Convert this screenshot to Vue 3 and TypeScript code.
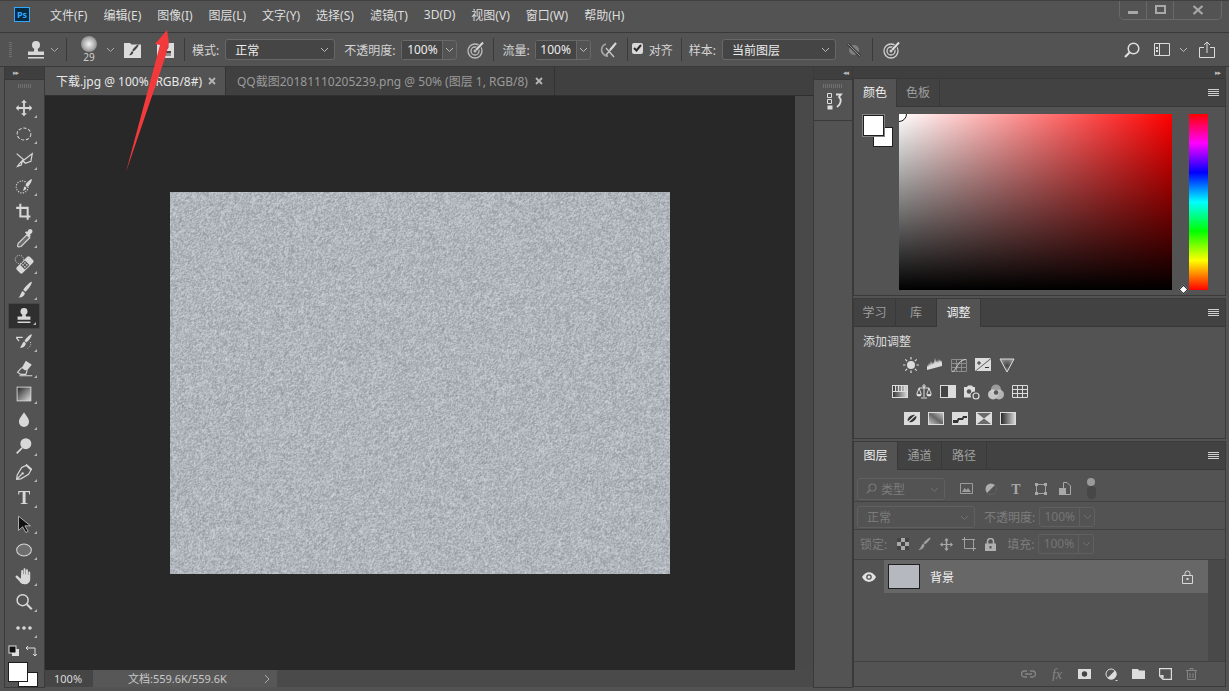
<script setup lang="ts">
import { onMounted, ref } from 'vue'

const menus = ['文件(F)', '编辑(E)', '图像(I)', '图层(L)', '文字(Y)', '选择(S)', '滤镜(T)', '3D(D)', '视图(V)', '窗口(W)', '帮助(H)']

const c = '#d8d8d8'
// tool strip icons, 24x24 box centred on the row
const tools: string[] = [
  `<path fill="${c}" d="M12 3l3.2 3.2h-2.2V11h4.800V8.800L21 12l-3.200 3.200V13H13v4.800h2.200L12 21l-3.200-3.200H11V13H6.200v2.200L3 12l3.200-3.200V11H11V6.200H8.800z"/>`,
  `<ellipse cx="12" cy="12" rx="7.500" ry="6.500" fill="none" stroke="${c}" stroke-width="1.100" stroke-dasharray="3.500 1.800"/>`,
  `<path fill="none" stroke="${c}" stroke-width="1.300" d="M4 5l8 7 9-7-1.500 8.500-6 2-3-3-3.500 3.500-2 3 4-1.500 1.500-5"/>`,
  `<circle cx="10" cy="13" r="6.500" fill="none" stroke="${c}" stroke-width="1.300" stroke-dasharray="1.200 1.500"/><path fill="${c}" d="M20.500 4.500c.6 2-3 7.500-5 8.500l-2-1.700c1-2.300 5.500-7 7-6.800zM12.800 12.300l1.800 1.500c-.3 2-2 3.300-4 3 1.400-1 1-3.300 2.200-4.500z"/>`,
  `<path fill="none" stroke="${c}" stroke-width="2.200" d="M8 3v14h11M3.500 7.500H16v13"/><path fill="#535353" d="M3 3h2v2H3z"/>`,
  `<path fill="${c}" d="M15 8.500l-9.500 9.500-.5 3 .8.800 3-.6 9.500-9.500z" fill-opacity=".2" stroke="${c}" stroke-width="1.200"/><path fill="${c}" d="M17 3c1-1 2.500-1 3.500 0s1 2.500 0 3.500L18.500 8.500l1 1-1.500 1.500-5-5 1.500-1.500 1 1z"/>`,
  `<g transform="rotate(-45 13 13)"><rect x="3" y="8.500" width="20" height="9" rx="2" fill="${c}"/><rect x="9.500" y="9.500" width="7" height="7" fill="#535353"/><g fill="${c}"><circle cx="11.500" cy="11.500" r=".9"/><circle cx="14.500" cy="11.500" r=".9"/><circle cx="11.500" cy="14.500" r=".9"/><circle cx="14.500" cy="14.500" r=".9"/></g></g><circle cx="7" cy="7" r="4.500" fill="#535353" stroke="${c}" stroke-dasharray="1.200 1.300"/>`,
  `<path fill="${c}" d="M20.500 3c.6 2.500-4.500 9-7 11l-2.300-2c1.500-3 7-8.500 9.300-9zM10.500 13l2.500 2.200c-.5 3.300-3.500 5.500-7 5 2.300-1.700 2.300-5.500 4.500-7.200z"/>`,
  `<circle cx="12" cy="7" r="3.800" fill="${c}"/><path fill="${c}" d="M10.500 9h3l.6 3.500H19V16H5v-3.500h4.900zM5 18h14v1.500H5z"/>`,
  `<path fill="${c}" d="M20.500 3.500c.5 2-3.500 7.500-6 9l-2-1.700c1.500-2.800 6-7.500 8-7.300zM12 11.500l2 1.800c-.2 3-3 5.500-6.500 5 2-1.500 2.500-5.300 4.500-6.800z"/><path fill="none" stroke="${c}" stroke-width="1.300" d="M3.500 7h7M3.500 7l3 4"/><path fill="none" stroke="${c}" stroke-dasharray="1 1.500" d="M19 12c1 3 0 5-3 7"/>`,
  `<path fill="${c}" d="M14 4l6.500 4.500-5 6H13L9.500 12z"/><path fill="none" stroke="${c}" stroke-width="1.200" d="M9.500 11.500l-4.500 5 3.500 2.500H14l1.500-4.500M7 20.500h14"/>`,
  `<defs><linearGradient id="tg" x1="0" x2="1" y1="0" y2="1"><stop offset="0" stop-color="#222"/><stop offset="1" stop-color="#ddd"/></linearGradient></defs><rect x="4.500" y="4.500" width="15" height="15" fill="url(#tg)" stroke="${c}"/>`,
  `<path fill="${c}" d="M12 3.500c2 3.500 5.500 6.500 5.500 10.500a5.500 5.500 0 0 1-11 0c0-4 3.500-7 5.500-10.500z"/>`,
  `<circle cx="14" cy="9.500" r="6" fill="${c}"/><path stroke="${c}" stroke-width="1.800" d="M10 14l-6 6"/>`,
  `<path fill="none" stroke="${c}" stroke-width="1.300" d="M15 4.500l5 4.500-3 5.500-8.500 5L4 20l.5-4.500L9.500 7zM4.500 19.500l5-5"/><circle cx="10.500" cy="13.500" r="1.300" fill="${c}"/><path fill="${c}" d="M14.500 3l6.500 6-1.500 1.500L13.500 5z"/>`,
  `<text x="12" y="19" text-anchor="middle" font-family="Liberation Serif, serif" font-weight="700" font-size="20" fill="${c}">T</text>`,
  `<path fill="#111" stroke="${c}" stroke-width=".8" d="M6 3.500l13 10.500h-6l3.500 6-2.500 1.300-3.500-6.300L6 19z"/>`,
  `<ellipse cx="12" cy="12" rx="8" ry="6.500" fill="#6e6e6e" stroke="${c}" stroke-width="1.100"/>`,
  `<path fill="${c}" d="M9 7c0-2 2-2 2 0v3h.5V5c0-2 2.200-2 2.200 0v5h.5V6c0-2 2.100-2 2.100 0v5h.5V8.500c0-1.800 2-1.800 2 0V15c0 4-2.500 6-6 6-3 0-4.500-1-6-3.500L3 13.500c-.8-1.600 1-2.700 2.200-1.500L8 14.800h.6z"/>`,
  `<circle cx="10.500" cy="10" r="6" fill="none" stroke="${c}" stroke-width="1.600"/><path stroke="${c}" stroke-width="2.200" d="M15 14.500l5.500 5.500"/>`,
  `<g fill="${c}"><circle cx="5.500" cy="12" r="2"/><circle cx="12" cy="12" r="2"/><circle cx="18.500" cy="12" r="2"/></g>`,
]

const g = '#dcdcdc'
const adjRows: string[][] = [
  [
    `<circle cx="8" cy="8" r="4" fill="${g}"/><path stroke="${g}" stroke-width="1.200" d="M8 0v2.500M8 13.500V16M0 8h2.500M13.500 8H16M2.300 2.300l1.800 1.800M11.900 11.900l1.800 1.800M2.300 13.700l1.800-1.800M11.900 4.100l1.800-1.800"/>`,
    `<path fill="${g}" d="M0 13V8l1 2 1-4 1 3 1-5 1 4 1-3 1 2 1-6 1 5 1-3 1 3 1-4 1 3 1-2 1 3v3z"/>`,
    `<path fill="none" stroke="#8c8c8c" d="M.5 2.500h15v12H.5zM5.500 2.500v12M10.500 2.500v12M.5 6.500h15M.5 10.500h15"/><path fill="none" stroke="#cfcfcf" d="M1 14.500c5 0 5-12 14-12"/>`,
    `<rect y="1" width="16" height="13" fill="${g}"/><path fill="#535353" d="M0 14L16 1v1L1 14z"/><path stroke="#333" d="M2 6h4M4 4v4M10 10.500h4"/>`,
    `<defs><radialGradient id="vg"><stop offset="0" stop-color="#444"/><stop offset="1" stop-color="#8a8a8a"/></radialGradient></defs><path fill="url(#vg)" stroke="${g}" d="M1 2h14L8 15z"/>`,
  ],
  [
    `<defs><linearGradient id="hs" x1="0" x2="1" y1="0" y2="0"><stop offset="0" stop-color="#333"/><stop offset="1" stop-color="#ddd"/></linearGradient></defs><rect x=".5" y="1.500" width="15" height="12" fill="url(#hs)" stroke="${g}"/><path stroke="${g}" stroke-width="1" d="M.5 7.500h15M3.500 2v5M6.500 2v5M9.500 2v5M12.500 2v5"/>`,
    `<path fill="none" stroke="${g}" d="M8 2v11M3 4h10M3 4L.8 10M3 4l2.200 6M13 4l-2.200 6M13 4l2.200 6M5 14h6"/><path fill="${g}" d="M.5 10h5a2.500 2.500 0 0 1-5 0zM10.500 10h5a2.500 2.500 0 0 1-5 0z"/><circle cx="8" cy="2" r="1.200" fill="none" stroke="${g}"/>`,
    `<rect x=".5" y="1.500" width="15" height="12" fill="#444" stroke="${g}"/><rect x="8" y="1.500" width="7.500" height="12" fill="${g}"/>`,
    `<path fill="${g}" d="M0 3h3l1-1.500h4L9 3h2v4.500a4 4 0 0 0-4 6H0z"/><circle cx="5" cy="7.500" r="2.200" fill="#535353"/><circle cx="12" cy="12" r="3" fill="none" stroke="${g}" stroke-width="1.200"/>`,
    `<circle cx="8" cy="5.500" r="5" fill="#9a9a9a"/><circle cx="5" cy="10.500" r="5" fill="#dadada" fill-opacity=".85"/><circle cx="11" cy="10.500" r="5" fill="#c6c6c6" fill-opacity=".85"/><circle cx="8" cy="8.500" r="2.200" fill="#555"/>`,
    `<path fill="none" stroke="${g}" d="M.5 1.500h15v12H.5zM5.500 1.500v12M10.500 1.500v12M.5 5.500h15M.5 9.500h15"/>`,
  ],
  [
    `<rect y="1" width="16" height="13" fill="${g}"/><ellipse cx="8" cy="7.500" rx="5" ry="3" transform="rotate(-35 8 7.500)" fill="#333"/><path stroke="${g}" stroke-width="1.200" d="M3 12L13 3"/>`,
    `<defs><linearGradient id="ps" x1="0" x2="1" y1="1" y2="0"><stop offset="0" stop-color="#ccc"/><stop offset=".5" stop-color="#666"/><stop offset="1" stop-color="#ccc"/></linearGradient></defs><rect x=".5" y="1.500" width="15" height="12" fill="url(#ps)" stroke="${g}"/>`,
    `<rect y="1" width="16" height="13" fill="${g}"/><path fill="#333" d="M1 12V9h4l1-2h4l1-2h4v2h-3l-1 2H7l-1 3z"/>`,
    `<rect y="1" width="16" height="13" fill="${g}"/><path fill="#6a6a6a" d="M1 2h14L8 7.500zM1 13h14L8 7.500z"/>`,
    `<defs><linearGradient id="gm" x1="0" x2="1" y1="0" y2="0"><stop offset="0" stop-color="#222"/><stop offset="1" stop-color="#ddd"/></linearGradient></defs><rect x=".5" y="1.500" width="15" height="12" fill="url(#gm)" stroke="${g}"/>`,
  ],
]

const noise = ref<HTMLCanvasElement | null>(null)

// the document is a plain grey noise texture
onMounted(() => {
  const cv = noise.value
  if (!cv) return
  const w = cv.width
  const h = cv.height
  const ctx = cv.getContext('2d')!
  const img = ctx.createImageData(w, h)
  let seed = 1337
  const rnd = () => {
    seed = (seed * 1664525 + 1013904223) >>> 0
    return seed / 4294967296
  }
  const raw = new Float32Array(w * h)
  for (let i = 0; i < raw.length; i++) raw[i] = rnd() - 0.5
  for (let y = 0; y < h; y++) {
    for (let x = 0; x < w; x++) {
      const r = x + 1 < w ? raw[y * w + x + 1] : 0
      const d = y + 1 < h ? raw[(y + 1) * w + x] : 0
      const v = (raw[y * w + x] + r * 0.7 + d * 0.7) * 26
      const i = (y * w + x) * 4
      img.data[i] = 176 + v
      img.data[i + 1] = 181 + v
      img.data[i + 2] = 187 + v
      img.data[i + 3] = 255
    }
  }
  ctx.putImageData(img, 0, 0)
})
</script>

<template>
  <div class="ps">
    <header class="menubar">
      <div class="logo">Ps</div>
      <nav class="menus">
        <span v-for="m in menus" :key="m">{{ m }}</span>
      </nav>
      <div class="winctl">
        <span class="wbtn"><i class="w-min"></i></span>
        <span class="wbtn"><i class="w-max"></i></span>
        <span class="wbtn wide">
          <svg width="12" height="12" viewBox="0 0 12 12"><path stroke="#a8a8a8" stroke-width="2.200" d="M1.500 2l9 8M10.500 2l-9 8" /></svg>
        </span>
      </div>
    </header>

    <section class="options">
      <div class="grip-v"></div>
      <svg class="ml15" width="18" height="20" viewBox="0 0 18 20"><circle cx="9" cy="5" r="4" fill="#d8d8d8" /><path fill="#d8d8d8" d="M7.500 7h3l.6 4.500H17V15H1v-3.500h5.900zM1 17h16v1.500H1z" /></svg>
      <svg class="ml5" width="9" height="6" viewBox="0 0 9 6"><path fill="none" stroke="#aaa" d="M1 1l3.500 3.500L8 1" /></svg>
      <i class="vsep ml7"></i>
      <div class="brushtip">
        <span class="tip"></span>
        <span class="tipnum">29</span>
      </div>
      <svg class="ml7" width="9" height="6" viewBox="0 0 9 6"><path fill="none" stroke="#aaa" d="M1 1l3.500 3.500L8 1" /></svg>
      <svg class="ml9" width="17" height="17" viewBox="0 0 17 17"><path fill="#dcdcdc" d="M0 2h6l1.500 1.500H17V17H0z" /><path fill="#444" d="M14.500 3.500c.5 1.500-3 5.500-5 7l-1.300-1.200c1.300-2 4.800-5.800 6.300-5.800zM8 10l1.300 1.200c-.3 2-2 3.300-4.300 3 1.500-1 1.700-3 3-4.200z" /></svg>
      <svg class="ml16" width="17" height="17" viewBox="0 0 17 17"><path fill="#dcdcdc" d="M0 2h17v15H0z" /><circle cx="8.500" cy="5.500" r="3" fill="#444" /><path fill="#444" d="M7.500 7h2l.4 3H14v2.500H3V10h4.100zM3 13.500h11v1H3z" /></svg>
      <i class="vsep ml10"></i>
      <span class="lbl ml7">模式:</span>
      <div class="select ml6 w110">正常<svg width="9" height="6" viewBox="0 0 9 6"><path fill="none" stroke="#bbb" d="M1 1l3.500 3.500L8 1" /></svg></div>
      <span class="lbl ml9">不透明度:</span>
      <div class="spin ml6"><span>100%</span><b><svg width="9" height="6" viewBox="0 0 9 6"><path fill="none" stroke="#bbb" d="M1 1l3.500 3.500L8 1" /></svg></b></div>
      <svg class="ml10" width="18" height="18" viewBox="0 0 18 18"><circle cx="8" cy="10" r="7" fill="none" stroke="#bdbdbd" stroke-width="1.300" /><circle cx="8" cy="10" r="4" fill="none" stroke="#bdbdbd" stroke-width="1.300" /><circle cx="8" cy="10" r="1.500" fill="#bdbdbd" /><path stroke="#535353" stroke-width="3.500" d="M9 9l7-7" /><path stroke="#d8d8d8" stroke-width="2" d="M9 9l7-7.500" /></svg>
      <i class="vsep ml8"></i>
      <span class="lbl ml8">流量:</span>
      <div class="spin ml5"><span>100%</span><b><svg width="9" height="6" viewBox="0 0 9 6"><path fill="none" stroke="#bbb" d="M1 1l3.500 3.500L8 1" /></svg></b></div>
      <svg class="ml9" width="18" height="18" viewBox="0 0 18 18"><path fill="none" stroke="#a0a0a0" stroke-width="1.800" d="M6 3C2 4 1 8 2 11c1 2 3 4 6 4" /><path fill="none" stroke="#c8c8c8" stroke-width="1.300" d="M6 14l8-9M6 7l8 9" /><path stroke="#d8d8d8" stroke-width="2" d="M10 9l6-7" /></svg>
      <i class="vsep ml9"></i>
      <span class="check ml4"><svg width="9" height="8" viewBox="0 0 9 8"><path fill="none" stroke="#2c2c2c" stroke-width="2" d="M1 4l2.500 2.500L8 1" /></svg></span>
      <span class="lbl ml6">对齐</span>
      <i class="vsep ml8"></i>
      <span class="lbl ml7">样本:</span>
      <div class="select ml6 w114">当前图层<svg width="9" height="6" viewBox="0 0 9 6"><path fill="none" stroke="#bbb" d="M1 1l3.500 3.500L8 1" /></svg></div>
      <svg class="ml11" width="14" height="14" viewBox="0 0 14 14"><circle cx="7" cy="7" r="5" fill="#7f7f7f" /><path stroke="#3d3d3d" stroke-width="3" d="M1 1l12 12" /><path stroke="#8f8f8f" d="M1 1l12 12" /></svg>
      <i class="vsep ml11"></i>
      <svg class="ml10" width="18" height="18" viewBox="0 0 18 18"><circle cx="8" cy="10" r="7" fill="none" stroke="#cfcfcf" stroke-width="1.300" /><circle cx="8" cy="10" r="4" fill="none" stroke="#cfcfcf" stroke-width="1.300" /><circle cx="8" cy="10" r="1.500" fill="#cfcfcf" /><path stroke="#535353" stroke-width="3.500" d="M9 9l7-7" /><path stroke="#e0e0e0" stroke-width="2" d="M9 9l7-7.500" /></svg>
      <div class="opt-right">
        <svg width="16" height="16" viewBox="0 0 16 16"><circle cx="9.500" cy="6.500" r="5.300" fill="none" stroke="#e0e0e0" stroke-width="1.500" /><path stroke="#e0e0e0" stroke-width="2.200" d="M5.500 10.500L1 15" /></svg>
        <svg class="ml14" width="17" height="13" viewBox="0 0 17 13"><path fill="none" stroke="#dcdcdc" d="M.5.500h15v12H.5zM5.500.500v12" /><path fill="#dcdcdc" d="M2 4h2v2H2zM2 7h2v2H2z" /></svg>
        <svg class="ml8" width="9" height="6" viewBox="0 0 9 6"><path fill="none" stroke="#bbb" d="M1 1l3.500 3.500L8 1" /></svg>
        <svg class="ml11" width="16" height="17" viewBox="0 0 16 17"><path fill="none" stroke="#dcdcdc" d="M5 6.500H.5v10h15v-10H11M8 12V1M5 4l3-3 3 3" /></svg>
      </div>
    </section>

    <main class="workspace">
      <aside class="tools">
        <div class="strip-head"><span class="arrows">▸▸</span></div>
        <div class="grip-h"></div>
        <div class="toollist">
          <div v-for="(t, i) in tools" :key="i" class="tool" :class="{ active: i === 8 }">
            <svg width="22" height="22" viewBox="0 0 24 24" v-html="t"></svg>
            <i class="corner"></i>
          </div>
        </div>
        <div class="swap">
          <svg width="12" height="12" viewBox="0 0 12 12"><rect x="4" y="4" width="7" height="7" fill="#e0e0e0" /><rect x="1" y="1" width="7" height="7" fill="#111" stroke="#e0e0e0" /></svg>
          <svg width="12" height="12" viewBox="0 0 12 12"><path fill="none" stroke="#dcdcdc" d="M1 3h9v8M1 3l2-2M1 3l2 2M10 11l-2-2M10 11l2-2" /></svg>
        </div>
        <div class="colors">
          <i class="col-bg"></i>
          <i class="col-fg"></i>
        </div>
      </aside>

      <section class="doc">
        <div class="tabs">
          <div class="tab on">
            <span>下载.jpg @ 100% (RGB/8#)</span>
            <svg width="8" height="8" viewBox="0 0 8 8"><path stroke="#b5b5b5" stroke-width="1.800" d="M1 1l6 6M7 1L1 7" /></svg>
          </div>
          <div class="tab">
            <span>QQ截图20181110205239.png @ 50% (图层 1, RGB/8)</span>
            <svg width="8" height="8" viewBox="0 0 8 8"><path stroke="#b5b5b5" stroke-width="1.800" d="M1 1l6 6M7 1L1 7" /></svg>
          </div>
        </div>
        <div class="viewport">
          <div class="pasteboard">
            <canvas ref="noise" width="500" height="382"></canvas>
          </div>
          <div class="vscroll"></div>
        </div>
        <footer class="status">
          <span class="zoomval">100%</span>
          <span class="docinfo">文档:559.6K/559.6K<svg width="6" height="10" viewBox="0 0 6 10"><path fill="none" stroke="#aaa" d="M1 1l4 4-4 4" /></svg></span>
          <span class="hscroll"></span>
        </footer>
      </section>

      <aside class="dock">
        <div class="strip-head dockhead"><span class="arrows">◂◂</span></div>
        <div class="grip-h dockgrip"></div>
        <div class="dockicon">
          <svg width="16" height="17" viewBox="0 0 16 17"><path fill="none" stroke="#ddd" d="M.5.500h4v4h-4zM.5 6.500h4v4h-4z" /><path fill="#ddd" d="M.5 12.500h5v4h-5z" /><path fill="none" stroke="#ddd" stroke-width="1.800" d="M9 1.500h5L12 4c2.500 2 2.500 7-2 10" /></svg>
        </div>
      </aside>

      <div class="panels">
        <div class="strip-head panelhead"><span class="arrows">▸▸</span></div>

        <section class="panel p-color">
          <div class="ptabs">
            <span class="ptab on w43">颜色</span>
            <span class="ptab w43">色板</span>
            <span class="pmenu"></span>
          </div>
          <div class="color-body">
            <div class="swatches">
              <i class="sw-bg"></i>
              <i class="sw-fg"></i>
            </div>
            <div class="picker">
              <i class="picker-mark"></i>
            </div>
            <div class="huebar">
              <i class="hue-mark"></i>
            </div>
          </div>
        </section>

        <section class="panel p-adjust">
          <div class="ptabs">
            <span class="ptab w42">学习</span>
            <span class="ptab w41">库</span>
            <span class="ptab on w44">调整</span>
            <span class="pmenu"></span>
          </div>
          <div class="adj-body">
            <div class="adj-title">添加调整</div>
            <div v-for="(row, r) in adjRows" :key="r" class="adj-row" :class="'row' + r">
              <svg v-for="(a, i) in row" :key="i" width="16" height="16" viewBox="0 0 16 16" v-html="a"></svg>
            </div>
          </div>
        </section>

        <section class="panel p-layers">
          <div class="ptabs">
            <span class="ptab on w44">图层</span>
            <span class="ptab w44">通道</span>
            <span class="ptab w45">路径</span>
            <span class="pmenu"></span>
          </div>
          <div class="lrow r-filter">
            <div class="dim-select w88">
              <svg width="11" height="11" viewBox="0 0 11 11"><circle cx="6.500" cy="4.500" r="3.500" fill="none" stroke="#777" stroke-width="1.200" /><path stroke="#777" stroke-width="1.500" d="M4 7L1 10" /></svg>
              <span>类型</span>
              <svg class="end" width="9" height="6" viewBox="0 0 9 6"><path fill="none" stroke="#707070" d="M1 1l3.500 3.500L8 1" /></svg>
            </div>
            <div class="fil-icons">
              <svg width="13" height="11" viewBox="0 0 13 11"><path fill="none" stroke="#9c9c9c" d="M.5.500h12v10H.5z" /><path fill="#9c9c9c" d="M2 9l2.500-4 2 2 1.500-2 3 4z" /></svg>
              <svg width="12" height="12" viewBox="0 0 12 12"><circle cx="6" cy="6" r="5.500" fill="#adadad" /><path fill="#535353" d="M10 2A5.500 5.500 0 0 1 2 10z" /></svg>
              <svg width="14" height="14" viewBox="0 0 14 14"><text x="7" y="12" text-anchor="middle" font-family="Liberation Serif, serif" font-weight="700" font-size="14" fill="#a8a8a8">T</text></svg>
              <svg width="12" height="12" viewBox="0 0 12 12"><path fill="none" stroke="#a0a0a0" d="M1.500 1.500h9v9h-9z" /><path fill="#a8a8a8" d="M0 0h3v3H0zM9 0h3v3H9zM0 9h3v3H0zM9 9h3v3H9z" /></svg>
              <svg width="12" height="13" viewBox="0 0 12 13"><path fill="none" stroke="#a8a8a8" d="M4.500.500H8L11.500 4v8.500h-7z" /><rect y="6" width="7" height="7" fill="#a8a8a8" /></svg>
              <div class="toggle"><i></i></div>
            </div>
          </div>
          <div class="lrow r-blend">
            <div class="dim-select w118"><span class="plain">正常</span><svg class="end" width="9" height="6" viewBox="0 0 9 6"><path fill="none" stroke="#707070" d="M1 1l3.500 3.500L8 1" /></svg></div>
            <span class="dimlbl ml9">不透明度:</span>
            <div class="dim-spin"><span>100%</span><b><svg width="9" height="6" viewBox="0 0 9 6"><path fill="none" stroke="#707070" d="M1 1l3.500 3.500L8 1" /></svg></b></div>
          </div>
          <div class="lrow r-lock">
            <span class="dimlbl lock-l">锁定:</span>
            <div class="lock-icons">
              <svg width="12" height="12" viewBox="0 0 12 12"><rect width="12" height="12" fill="#a8a8a8" /><path fill="#444" d="M0 0h4v4H0zM8 0h4v4H8zM4 4h4v4H4zM0 8h4v4H0zM8 8h4v4H8z" /></svg>
              <svg width="13" height="14" viewBox="0 0 13 14"><path fill="#a0a0a0" d="M12.500.500c.4 1.500-3.500 5.500-5.500 7L5.500 6c1.500-2 5.500-5.500 7-5.500zM5 6.500l1.500 1.500c-.3 2.500-2.500 5-6 5 2-1 2.500-4.500 4.500-6.500z" /></svg>
              <svg width="13" height="13" viewBox="0 0 13 13"><path fill="#a8a8a8" d="M6.500 0l2.300 2.500H7.300V6h3.200V4.200L13 6.500 10.500 9V7H7.300v3.500h1.500L6.500 13l-2.300-2.500h1.500V7H2.500v2L0 6.500l2.500-2.300V6h3.200V2.500H4.200z" /></svg>
              <svg width="14" height="14" viewBox="0 0 14 14"><path fill="none" stroke="#a0a0a0" d="M2.500 2.500h9v9h-9z" /><path fill="#a8a8a8" d="M0 2h3v1H0zM2 0h1v3H2zM11 11h3v1h-3zM11 11h1v3h-1zM10 2h3v1h-3z" /></svg>
              <svg width="11" height="13" viewBox="0 0 11 13"><path fill="none" stroke="#b0b0b0" stroke-width="1.500" d="M2.500 6V3.500a3 3 0 0 1 6 0V6" /><rect y="5.500" width="11" height="7.500" fill="#b0b0b0" /><rect x="4.500" y="8" width="2" height="2.500" fill="#535353" /></svg>
            </div>
            <span class="dimlbl ml11">填充:</span>
            <div class="dim-spin"><span>100%</span><b><svg width="9" height="6" viewBox="0 0 9 6"><path fill="none" stroke="#707070" d="M1 1l3.500 3.500L8 1" /></svg></b></div>
          </div>
          <div class="layers-wrap">
            <div class="layerlist">
              <div class="layer">
                <span class="eye">
                  <svg width="14" height="10" viewBox="0 0 14 10"><path fill="#e2e2e2" d="M0 5c3.500-6.500 10.500-6.500 14 0-3.500 6.500-10.500 6.500-14 0z" /><circle cx="7" cy="5" r="2.800" fill="#535353" /><circle cx="7" cy="5" r="1.500" fill="#e2e2e2" /></svg>
                </span>
                <div class="layer-main">
                  <i class="thumb"></i>
                  <span class="lname">背景</span>
                  <svg class="lock" width="11" height="14" viewBox="0 0 11 14"><path fill="none" stroke="#d8d8d8" d="M3 6V3.500a2.500 2.500 0 0 1 5 0V6M.5 5.500h10v8H.5z" /><rect x="4.500" y="8" width="2" height="2" fill="#d8d8d8" /></svg>
                </div>
              </div>
            </div>
            <div class="lscroll"></div>
          </div>
          <div class="lfoot">
            <svg width="15" height="8" viewBox="0 0 15 8"><path fill="none" stroke="#858585" stroke-width="1.400" d="M6 1H3.500a3 3 0 0 0 0 6H6M9 1h2.500a3 3 0 0 1 0 6H9M4 4h7" /></svg>
            <svg width="14" height="14" viewBox="0 0 14 14"><text x="7" y="11.500" text-anchor="middle" font-family="Liberation Serif, serif" font-style="italic" font-size="14" fill="#858585">fx</text></svg>
            <svg width="13" height="10" viewBox="0 0 13 10"><rect width="13" height="10" fill="#dcdcdc" /><circle cx="6.500" cy="5" r="2.700" fill="#444" /></svg>
            <svg width="13" height="13" viewBox="0 0 13 13"><circle cx="6" cy="6" r="5" fill="#555" stroke="#ddd" /><path fill="#ddd" d="M10 2.500A5 5 0 0 1 2.500 10z" /><path fill="#fff" d="M10 12h3l-1.500 1z" /></svg>
            <svg width="13" height="10" viewBox="0 0 13 10"><path fill="#dcdcdc" d="M0 0h6l1 1.500h6V10H0z" /></svg>
            <svg width="13" height="12" viewBox="0 0 13 12"><path fill="none" stroke="#dcdcdc" stroke-width="1.200" d="M.6.600h11.800v10.800H4L.6 8z" /><path fill="#dcdcdc" d="M.6 7h4v4z" /></svg>
            <svg width="11" height="12" viewBox="0 0 11 12"><path fill="none" stroke="#858585" d="M1.500 3v8.500h8V3M0 2.500h11M4 2V.5h3V2M4 5v5M7 5v5" /></svg>
          </div>
        </section>
      </div>

      <svg class="annot" width="60" height="160" viewBox="0 0 60 160">
        <polygon fill="#f2393b" points="46,1 34,15 39,16 5,143 44,29 48,14" />
      </svg>
    </main>
  </div>
</template>

<style>
html, body { margin: 0; overflow: hidden; background: #535353; }
</style>

<style scoped>
.ps {
  width: 1229px;
  height: 691px;
  position: relative;
  overflow: hidden;
  background: #535353;
  color: #dcdcdc;
  font: 12px "Noto Sans", "Noto Sans CJK SC", sans-serif;
  box-sizing: border-box;
  border-top: 1px solid #404040;
}
svg { display: block; flex: none; }
i, b { font-style: normal; display: block; }

.menubar {
  height: 32px;
  box-sizing: border-box;
  padding-bottom: 4px;
  display: flex;
  align-items: center;
  border-bottom: 1px solid #393939;
  position: relative;
}
.logo {
  margin-left: 14px;
  width: 14px;
  height: 13px;
  border: 1px solid #31a8ff;
  background: #062a40;
  color: #31a8ff;
  font-size: 9px;
  line-height: 13px;
  text-align: center;
  font-weight: 700;
}
.menus { margin-left: 20px; display: flex; gap: 16px; color: #dedede; }
.winctl {
  position: absolute;
  right: 7px;
  top: -1px;
  height: 19px;
  display: flex;
  border: 1px solid #696969;
  border-top: 0;
  border-radius: 0 0 5px 5px;
}
.wbtn {
  width: 27px;
  box-sizing: border-box;
  display: flex;
  align-items: center;
  justify-content: center;
  border-right: 1px solid #696969;
}
.wbtn.wide { width: 47px; border-right: 0; }
.w-min { width: 10px; height: 3px; background: #a8a8a8; margin-top: 5px; }
.w-max { width: 7px; height: 5px; border: 2px solid #a8a8a8; }

.options {
  height: 33px;
  display: flex;
  align-items: center;
  border-bottom: 1px solid #393939;
}
.grip-v {
  margin-left: 9px;
  width: 3px;
  height: 16px;
  background: repeating-linear-gradient(#6e6e6e 0 1px, transparent 1px 2px);
}
.vsep { width: 1px; height: 23px; background: #3a3a3a; }
.lbl { color: #d4d4d4; white-space: nowrap; }
.ml4 { margin-left: 4px; } .ml5 { margin-left: 5px; } .ml6 { margin-left: 6px; }
.ml7 { margin-left: 7px; } .ml8 { margin-left: 8px; } .ml9 { margin-left: 9px; }
.ml10 { margin-left: 10px; } .ml11 { margin-left: 11px; }
.ml14 { margin-left: 14px; } .ml15 { margin-left: 15px; } .ml16 { margin-left: 16px; }
.brushtip { margin-left: 12px; width: 20px; display: flex; flex-direction: column; align-items: center; margin-top: -1px; }
.tip {
  width: 16px;
  height: 16px;
  border-radius: 50%;
  background: radial-gradient(circle, #f4f4f4 0, #a8a8a8 55%, #5a5a5a 100%);
}
.tipnum { font-size: 10px; line-height: 11px; color: #d0d0d0; }
.select {
  height: 21px;
  box-sizing: border-box;
  border: 1px solid #686868;
  border-radius: 3px;
  background: #454545;
  color: #ececec;
  display: flex;
  align-items: center;
  justify-content: space-between;
  padding: 0 5px 0 9px;
}
.w110 { width: 110px; }
.w114 { width: 114px; }
.spin {
  width: 56px;
  height: 20px;
  box-sizing: border-box;
  border: 1px solid #686868;
  border-radius: 3px;
  display: flex;
  background: #535353;
}
.spin span {
  width: 40px;
  background: #454545;
  color: #ececec;
  font-size: 12px;
  line-height: 18px;
  text-align: center;
  border-right: 1px solid #686868;
}
.spin b { flex: 1; display: flex; align-items: center; justify-content: center; }
.check {
  width: 11px;
  height: 11px;
  border-radius: 2px;
  background: #d8d8d8;
  display: flex;
  align-items: center;
  justify-content: center;
  margin-top: -3px;
}
.opt-right { margin-left: auto; margin-right: 14px; display: flex; align-items: center; }

.workspace {
  position: relative;
  height: 624px;
  display: flex;
}
.strip-head {
  height: 13px;
  background: #3f3f3f;
  border-bottom: 1px solid #383838;
  box-sizing: border-box;
}
.arrows {
  display: block;
  font-size: 7px;
  line-height: 12px;
  letter-spacing: -1px;
  color: #b8b8b8;
  font-family: "DejaVu Sans", sans-serif;
}
.grip-h {
  height: 4px;
  margin: 4px 13px 0;
  background: repeating-linear-gradient(90deg, #707070 0 1px, transparent 1px 2px);
}
.tools {
  margin-left: 4px;
  width: 39px;
  height: 620px;
  border-left: 1px solid #3a3a3a;
  border-right: 1px solid #3a3a3a;
  border-bottom: 1px solid #3a3a3a;
  position: relative;
  box-sizing: content-box;
  flex: none;
}
.tools .arrows { padding-left: 8px; }
.toollist { margin-top: 7px; display: flex; flex-direction: column; }
.tool {
  height: 26px;
  margin: 0 4px 0 3px;
  display: flex;
  align-items: center;
  justify-content: center;
  position: relative;
  box-sizing: border-box;
}
.tool.active {
  background: #2f2f2f;
  border: 1px solid #474747;
  border-radius: 2px;
}
.corner {
  position: absolute;
  right: 3px;
  bottom: 3px;
  border-style: solid;
  border-width: 0 0 3px 3px;
  border-color: transparent transparent #b5b5b5 transparent;
}
.swap {
  position: absolute;
  left: 3px;
  top: 578px;
  width: 30px;
  display: flex;
  gap: 5px;
}
.colors { position: absolute; left: 4px; top: 595px; width: 30px; height: 28px; }
.col-fg, .col-bg {
  position: absolute;
  background: #fff;
  border: 1px solid #1d1d1d;
  box-sizing: border-box;
}
.col-fg { left: -1px; top: 0; width: 20px; height: 20px; }
.col-bg { left: 9px; top: 10px; width: 20px; height: 15px; }

.doc { width: 768px; flex: none; display: flex; flex-direction: column; height: 620px; }
.tabs {
  height: 29px;
  display: flex;
  background: #404040;
  border-bottom: 1px solid #2f2f2f;
  box-sizing: border-box;
  flex: none;
}
.tab {
  display: flex;
  align-items: center;
  justify-content: space-between;
  padding: 0 11px;
  color: #9a9a9a;
  border-right: 1px solid #333;
  width: 329px;
  box-sizing: border-box;
  white-space: nowrap;
}
.tab.on { background: #535353; color: #e8e8e8; width: 181px; padding-right: 9px; }
.viewport { flex: 1; display: flex; min-height: 0; }
.pasteboard {
  width: 750px;
  background: #282828;
  padding: 96px 0 0 125px;
  box-sizing: border-box;
}
canvas { display: block; }
.vscroll { flex: 1; background: #494949; }
.status {
  height: 17px;
  display: flex;
  align-items: center;
  flex: none;
  background: #4a4a4a;
  font-size: 11px;
}
.zoomval { width: 48px; padding-left: 9px; box-sizing: border-box; line-height: 17px; background: #454545; color: #dadada; }
.docinfo {
  width: 184px;
  height: 17px;
  line-height: 17px;
  background: #575757;
  color: #c8c8c8;
  padding-left: 35px;
  box-sizing: border-box;
  display: flex;
  align-items: center;
  gap: 37px;
}
.hscroll { flex: 1; }

.dock {
  width: 38px;
  height: 620px;
  flex: none;
  border-left: 1px solid #3a3a3a;
  border-right: 1px solid #3a3a3a;
  border-bottom: 1px solid #3a3a3a;
}
.dockhead .arrows { text-align: right; padding-right: 4px; }
.dockgrip { margin: 4px 9px 0; }
.dockicon {
  margin-top: 2px;
  height: 27px;
  display: flex;
  justify-content: center;
  border-bottom: 1px solid #3a3a3a;
  padding: 3px 0 0 4px;
}

.panels { width: 373px; flex: none; height: 620px; display: flex; flex-direction: column; }
.panelhead { height: 12px; border-bottom: 1px solid #383838; }
.panelhead .arrows { text-align: right; padding-right: 6px; }
.panel { border: 1px solid #3a3a3a; border-top: 0; box-sizing: border-box; }
.p-color { height: 217px; }
.p-adjust { height: 141px; margin-top: 2px; border-top: 1px solid #3a3a3a; }
.p-layers { flex: 1; margin-top: 2px; border-top: 1px solid #3a3a3a; display: flex; flex-direction: column; }
.ptabs {
  height: 28px;
  box-sizing: border-box;
  display: flex;
  background: #424242;
  border-bottom: 1px solid #383838;
  position: relative;
  flex: none;
}
.ptab {
  color: #9e9e9e;
  line-height: 27px;
  text-align: center;
  border-right: 1px solid #383838;
  box-sizing: border-box;
}
.ptab.on { background: #535353; color: #f0f0f0; height: 28px; }
.w41 { width: 41px; } .w42 { width: 42px; } .w43 { width: 43px; }
.w44 { width: 44px; } .w45 { width: 45px; }
.pmenu {
  position: absolute;
  right: 6px;
  top: 10px;
  width: 11px;
  height: 7px;
  background: repeating-linear-gradient(#cfcfcf 0 1px, transparent 1px 2px);
}

.color-body { position: relative; height: 188px; display: flex; }
.swatches { position: relative; width: 45px; flex: none; }
.sw-fg, .sw-bg { position: absolute; background: #fff; border: 1px solid #1f1f1f; box-sizing: border-box; }
.sw-fg { left: 9px; top: 8px; width: 21px; height: 21px; outline: 1px solid #828282; }
.sw-bg { left: 19px; top: 20px; width: 20px; height: 20px; }
.picker {
  position: relative;
  margin-top: 7px;
  width: 273px;
  height: 176px;
  background: linear-gradient(to top, #000, transparent), linear-gradient(to right, #fff, #f00);
}
.picker-mark {
  position: absolute;
  left: -8px;
  top: -8px;
  width: 16px;
  height: 16px;
  border-radius: 50%;
  background: #fff;
  border: 1px solid #111;
  clip-path: inset(8px 0 0 8px);
  box-sizing: border-box;
}
.huebar {
  position: relative;
  margin: 7px 0 0 17px;
  width: 19px;
  height: 176px;
  background: linear-gradient(#f00 0, #f0f 16.6%, #00f 33.3%, #0ff 50%, #0f0 66.6%, #ff0 83.3%, #f00 100%);
}
.hue-mark {
  position: absolute;
  left: -9px;
  bottom: -3px;
  width: 5px;
  height: 5px;
  background: #fff;
  border: 1px solid #222;
  transform: rotate(45deg);
}

.adj-body { position: relative; }
.adj-title { padding: 6px 0 0 9px; line-height: 18px; color: #dcdcdc; }
.adj-row { display: flex; gap: 8px; height: 27px; align-items: center; }
.row0 { margin-left: 49px; }
.row1 { margin-left: 38px; }
.row2 { margin-left: 50px; }

.lrow {
  display: flex;
  align-items: center;
  box-sizing: border-box;
  border-bottom: 1px solid #414141;
  padding-left: 3px;
  flex: none;
}
.r-filter { height: 32px; padding-top: 6px; }
.r-blend { height: 28px; padding-top: 2px; }
.r-lock { height: 30px; padding-bottom: 1px; }
.dim-select {
  height: 22px;
  box-sizing: border-box;
  border: 1px solid #606060;
  border-radius: 3px;
  display: flex;
  align-items: center;
  position: relative;
  padding-left: 8px;
  gap: 4px;
  color: #7d7d7d;
}
.dim-select .end { position: absolute; right: 5px; top: 8px; }
.dim-select .plain { padding-left: 1px; }
.w88 { width: 88px; }
.w118 { width: 118px; }
.fil-icons { margin-left: 15px; display: flex; align-items: center; gap: 12px; }
.toggle {
  width: 9px;
  height: 13px;
  margin: 7px 0 0 4px;
  background: #474747;
  border-radius: 5px;
  position: relative;
}
.toggle i {
  position: absolute;
  left: 0;
  top: -8px;
  width: 8px;
  height: 8px;
  border-radius: 50%;
  background: #9a9a9a;
}
.dimlbl { color: #7d7d7d; white-space: nowrap; }
.lock-l { margin-left: 3px; }
.lock-icons { margin-left: 10px; display: flex; align-items: center; gap: 9px; }
.dim-spin {
  margin-left: 4px;
  width: 56px;
  height: 20px;
  box-sizing: border-box;
  border: 1px solid #606060;
  border-radius: 3px;
  display: flex;
  color: #757575;
  font-size: 12px;
}
.dim-spin span { width: 39px; line-height: 18px; text-align: center; border-right: 1px solid #606060; }
.dim-spin b { flex: 1; display: flex; align-items: center; justify-content: center; }
.layers-wrap { flex: 1; display: flex; min-height: 0; }
.layerlist { flex: 1; }
.layer { height: 33px; display: flex; align-items: center; }
.eye { width: 30px; display: flex; justify-content: center; height: 33px; align-items: center; }
.layer-main {
  flex: 1;
  height: 33px;
  background: #676767;
  display: flex;
  align-items: center;
  padding-left: 4px;
  position: relative;
}
.thumb {
  width: 32px;
  height: 25px;
  box-sizing: border-box;
  background: #b5b9bf;
  border: 1px solid #1f1f1f;
}
.lname { margin-left: 10px; color: #f2f2f2; }
.lock { position: absolute; right: 15px; top: 10px; }
.lscroll { width: 17px; background: #494949; flex: none; }
.lfoot {
  height: 25px;
  flex: none;
  border-top: 1px solid #414141;
  display: flex;
  align-items: center;
  justify-content: flex-end;
  box-sizing: border-box;
  padding-right: 28px;
  gap: 14px;
}

.annot { position: absolute; left: 121px; top: -38px; pointer-events: none; }
</style>
